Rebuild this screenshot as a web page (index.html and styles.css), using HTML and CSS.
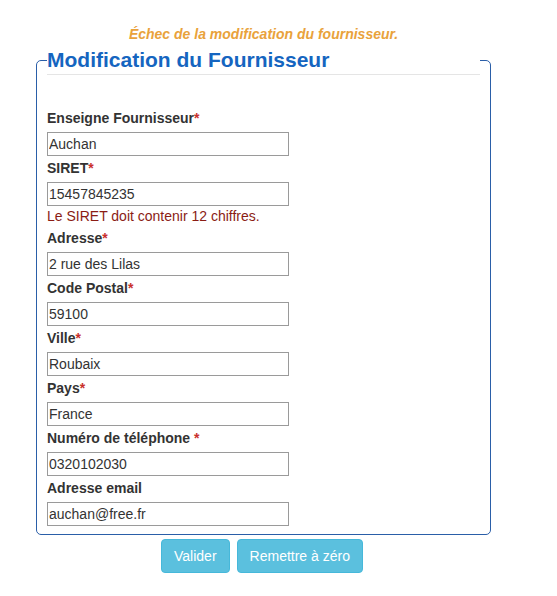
FILE: index.html
```html
<!DOCTYPE html>
<html lang="fr">
<head>
<meta charset="utf-8">
<title>Modification du Fournisseur</title>
<link rel="stylesheet" href="styles.css">
</head>
<body>
<div class="page">
  <p class="alert">Échec de la modification du fournisseur.</p>
  <form class="form">
    <fieldset class="box">
      <legend class="box-title">Modification du Fournisseur</legend>
      <div class="field">
        <label class="lbl">Enseigne Fournisseur<span class="req">*</span></label>
        <input class="inp" type="text" value="Auchan">
      </div>
      <div class="field">
        <label class="lbl">SIRET<span class="req">*</span></label>
        <input class="inp" type="text" value="15457845235">
        <div class="err">Le SIRET doit contenir 12 chiffres.</div>
      </div>
      <div class="field">
        <label class="lbl">Adresse<span class="req">*</span></label>
        <input class="inp" type="text" value="2 rue des Lilas">
      </div>
      <div class="field">
        <label class="lbl">Code Postal<span class="req">*</span></label>
        <input class="inp" type="text" value="59100">
      </div>
      <div class="field">
        <label class="lbl">Ville<span class="req">*</span></label>
        <input class="inp" type="text" value="Roubaix">
      </div>
      <div class="field">
        <label class="lbl">Pays<span class="req">*</span></label>
        <input class="inp" type="text" value="France">
      </div>
      <div class="field">
        <label class="lbl">Numéro de téléphone <span class="req">*</span></label>
        <input class="inp" type="text" value="0320102030">
      </div>
      <div class="field">
        <label class="lbl">Adresse email</label>
        <input class="inp" type="text" value="auchan@free.fr">
      </div>
    </fieldset>
    <div class="actions">
      <button type="submit" class="btn">Valider</button>
      <button type="reset" class="btn">Remettre à zéro</button>
    </div>
  </form>
</div>
</body>
</html>
```
FILE: styles.css
```css
html, body {
  margin: 0;
  padding: 0;
  background: #fff;
}
body {
  font-family: "Liberation Sans", Arial, sans-serif;
  font-size: 14px;
  line-height: 20px;
  color: #333;
}
.page {
  width: 455px;
  margin-left: 36px;
  padding-top: 24px;
}
.alert {
  margin: 0;
  text-align: center;
  color: #e9a23b;
  font-weight: bold;
  font-style: italic;
  font-size: 14px;
  line-height: 20px;
}
.form {
  margin: 0;
}
.box {
  margin: 1px 0 0;
  border: 1px solid #2a5ea8;
  border-radius: 5px;
  padding: 0 10px 8px;
  min-width: 0;
}
.box-title {
  width: 100%;
  box-sizing: border-box;
  padding: 3px 0 3px;
  margin: 0 0 33px;
  font-size: 21px;
  line-height: 23px;
  font-weight: bold;
  color: #1565c0;
  border-bottom: 1px solid #e5e5e5;
}
.field {
  margin-top: 2px;
}
.field:first-of-type {
  margin-top: 0;
}
.lbl {
  display: block;
  font-weight: bold;
  margin-bottom: 4px;
  color: #333;
}
.req {
  color: #c9302c;
  font-weight: bold;
}
.inp {
  display: block;
  box-sizing: border-box;
  width: 242px;
  height: 24px;
  margin: 0;
  padding: 0 1px;
  border: 1px solid #9a9a9a;
  font-family: "Liberation Sans", Arial, sans-serif;
  font-size: 14px;
  color: #333;
  background: #fff;
}
.err {
  color: #8b1c14;
  margin: 0;
}
.actions {
  display: flex;
  justify-content: center;
  gap: 7px;
  margin-top: 4px;
  padding-right: 3px;
}
.btn {
  font-family: "Liberation Sans", Arial, sans-serif;
  font-size: 14px;
  line-height: 20px;
  padding: 6px 12px;
  color: #fff;
  background: #5bc0de;
  border: 1px solid #46b8da;
  border-radius: 4px;
  cursor: pointer;
}
```
